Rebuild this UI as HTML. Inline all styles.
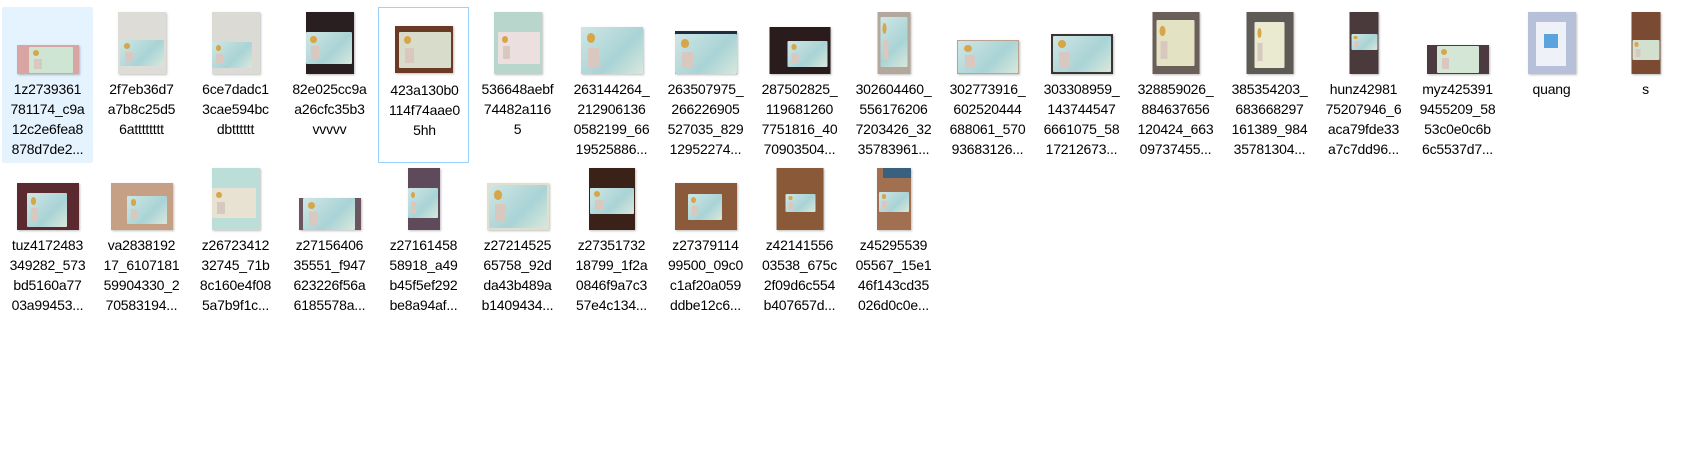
<!DOCTYPE html>
<html><head><meta charset="utf-8"><style>
html,body{margin:0;padding:0;background:#fff;width:1692px;height:458px;overflow:hidden;font-family:"Segoe UI","Liberation Sans",sans-serif}
.c{position:absolute;width:91px;height:156px;box-sizing:border-box}
.sel{background:#e5f3ff;border-radius:2px}
.hov{border:1px solid #99d1ff}
.t{position:absolute;bottom:89px;left:50%;transform:translateX(-50%);box-shadow:1px 1px 2px rgba(0,0,0,.25);overflow:hidden}
.t i{position:absolute;display:block;background:linear-gradient(135deg,#cfe6e4,#a9d3d6 60%,#d9e8dc);border-radius:1px}
.t i:before{content:"";position:absolute;left:12%;top:45%;width:18%;height:40%;background:#d9c8c0}
.t i:after{content:"";position:absolute;left:10%;top:12%;width:14%;height:22%;background:#d8a648;border-radius:50%}
.x{position:absolute;top:72px;left:0;width:91px;text-align:center;font-size:14px;line-height:20px;color:#000;white-space:nowrap;letter-spacing:-0.2px}
</style></head><body>

<div class="c sel" style="left:2px;top:7px"><div class="t" style="width:62px;height:29px;background:#d9a5a2"><i style="left:12px;top:2px;width:44px;height:26px;background:#cfe5d4"></i></div><div class="x">1z2739361<br>781174_c9a<br>12c2e6fea8<br>878d7de2...</div></div>
<div class="c" style="left:96px;top:7px"><div class="t" style="width:48px;height:62px;background:#dedcd6"><i style="left:2px;top:28px;width:44px;height:26px"></i></div><div class="x">2f7eb36d7<br>a7b8c25d5<br>6atttttttt</div></div>
<div class="c" style="left:190px;top:7px"><div class="t" style="width:48px;height:62px;background:#dcdad4"><i style="left:0px;top:30px;width:40px;height:26px"></i></div><div class="x">6ce7dadc1<br>3cae594bc<br>dbtttttt</div></div>
<div class="c" style="left:284px;top:7px"><div class="t" style="width:48px;height:62px;background:#2a1f20"><i style="left:0px;top:20px;width:46px;height:32px"></i></div><div class="x">82e025cc9a<br>a26cfc35b3<br>vvvvv</div></div>
<div class="c hov" style="left:378px;top:7px"><div class="t" style="width:58px;height:47px;background:#6a3a25"><i style="left:4px;top:6px;width:52px;height:36px;background:#d8dccb"></i></div><div class="x">423a130b0<br>114f74aae0<br>5hh</div></div>
<div class="c" style="left:472px;top:7px"><div class="t" style="width:48px;height:62px;background:#b8d6cc"><i style="left:4px;top:20px;width:42px;height:32px;background:#ecdfe0"></i></div><div class="x">536648aebf<br>74482a116<br>5</div></div>
<div class="c" style="left:566px;top:7px"><div class="t" style="width:62px;height:47px;background:#c9d8dc"><i style="left:0;top:0;width:62px;height:47px"></i></div><div class="x">263144264_<br>212906136<br>0582199_66<br>19525886...</div></div>
<div class="c" style="left:660px;top:7px"><div class="t" style="width:62px;height:43px;background:#1e2e40"><i style="left:0;top:3px;width:62px;height:40px"></i></div><div class="x">263507975_<br>266226905<br>527035_829<br>12952274...</div></div>
<div class="c" style="left:754px;top:7px"><div class="t" style="width:61px;height:47px;background:#2a1c1c"><i style="left:18px;top:14px;width:40px;height:26px"></i></div><div class="x">287502825_<br>119681260<br>7751816_40<br>70903504...</div></div>
<div class="c" style="left:848px;top:7px"><div class="t" style="width:33px;height:62px;background:#b4a89c"><i style="left:3px;top:5px;width:27px;height:50px"></i></div><div class="x">302604460_<br>556176206<br>7203426_32<br>35783961...</div></div>
<div class="c" style="left:942px;top:7px"><div class="t" style="width:62px;height:34px;background:#b9a494"><i style="left:1px;top:1px;width:60px;height:32px"></i></div><div class="x">302773916_<br>602520444<br>688061_570<br>93683126...</div></div>
<div class="c" style="left:1036px;top:7px"><div class="t" style="width:62px;height:40px;background:#3a3532"><i style="left:2px;top:2px;width:58px;height:36px"></i></div><div class="x">303308959_<br>143744547<br>6661075_58<br>17212673...</div></div>
<div class="c" style="left:1130px;top:7px"><div class="t" style="width:47px;height:62px;background:#6b5f5a"><i style="left:4px;top:8px;width:38px;height:46px;background:#e3e2c3"></i></div><div class="x">328859026_<br>884637656<br>120424_663<br>09737455...</div></div>
<div class="c" style="left:1224px;top:7px"><div class="t" style="width:47px;height:62px;background:#5e5a55"><i style="left:8px;top:10px;width:30px;height:46px;background:#e9ead0"></i></div><div class="x">385354203_<br>683668297<br>161389_984<br>35781304...</div></div>
<div class="c" style="left:1318px;top:7px"><div class="t" style="width:29px;height:62px;background:#4a3a3c"><i style="left:2px;top:22px;width:26px;height:16px"></i></div><div class="x">hunz42981<br>75207946_6<br>aca79fde33<br>a7c7dd96...</div></div>
<div class="c" style="left:1412px;top:7px"><div class="t" style="width:62px;height:29px;background:#4c3a40"><i style="left:10px;top:1px;width:42px;height:27px;background:#d4e6d6"></i></div><div class="x">myz425391<br>9455209_58<br>53c0e0c6b<br>6c5537d7...</div></div>
<div class="c" style="left:1506px;top:7px"><div class="t" style="width:48px;height:62px;background:#b6c0d8"><b style="position:absolute;left:8px;top:10px;width:30px;height:44px;background:#eef2f8"></b><b style="position:absolute;left:16px;top:22px;width:14px;height:14px;background:#5aa3dc"></b></div><div class="x">quang</div></div>
<div class="c" style="left:1600px;top:7px"><div class="t" style="width:29px;height:62px;background:#7a4a33"><i style="left:1px;top:28px;width:27px;height:20px;background:#d2e1cf"></i></div><div class="x">s</div></div>

<div class="c" style="left:2px;top:163px"><div class="t" style="width:62px;height:47px;background:#5a2a30"><i style="left:10px;top:10px;width:40px;height:34px"></i></div><div class="x">tuz4172483<br>349282_573<br>bd5160a77<br>03a99453...</div></div>
<div class="c" style="left:96px;top:163px"><div class="t" style="width:62px;height:47px;background:#c5a085"><i style="left:16px;top:13px;width:40px;height:28px"></i></div><div class="x">va2838192<br>17_6107181<br>59904330_2<br>70583194...</div></div>
<div class="c" style="left:190px;top:163px"><div class="t" style="width:48px;height:62px;background:#bcded8"><i style="left:0;top:20px;width:44px;height:30px;background:#e8e2d2"></i></div><div class="x">z26723412<br>32745_71b<br>8c160e4f08<br>5a7b9f1c...</div></div>
<div class="c" style="left:284px;top:163px"><div class="t" style="width:62px;height:32px;background:#6a5560"><i style="left:4px;top:0;width:52px;height:32px"></i></div><div class="x">z27156406<br>35551_f947<br>623226f56a<br>6185578a...</div></div>
<div class="c" style="left:378px;top:163px"><div class="t" style="width:32px;height:62px;background:#5e4a5a"><i style="left:0;top:20px;width:30px;height:30px"></i></div><div class="x">z27161458<br>58918_a49<br>b45f5ef292<br>be8a94af...</div></div>
<div class="c" style="left:472px;top:163px"><div class="t" style="width:62px;height:47px;background:#e0e0d0"><i style="left:2px;top:2px;width:58px;height:43px"></i></div><div class="x">z27214525<br>65758_92d<br>da43b489a<br>b1409434...</div></div>
<div class="c" style="left:566px;top:163px"><div class="t" style="width:46px;height:62px;background:#3a2218"><i style="left:1px;top:20px;width:44px;height:26px"></i></div><div class="x">z27351732<br>18799_1f2a<br>0846f9a7c3<br>57e4c134...</div></div>
<div class="c" style="left:660px;top:163px"><div class="t" style="width:62px;height:47px;background:#8a5a3a"><i style="left:13px;top:11px;width:34px;height:26px"></i></div><div class="x">z27379114<br>99500_09c0<br>c1af20a059<br>ddbe12c6...</div></div>
<div class="c" style="left:754px;top:163px"><div class="t" style="width:47px;height:62px;background:#8a5a38"><i style="left:9px;top:26px;width:30px;height:18px"></i></div><div class="x">z42141556<br>03538_675c<br>2f09d6c554<br>b407657d...</div></div>
<div class="c" style="left:848px;top:163px"><div class="t" style="width:34px;height:62px;background:#a07050"><b style="position:absolute;left:6px;top:0;width:28px;height:10px;background:#3a6080"></b><i style="left:2px;top:24px;width:30px;height:20px"></i></div><div class="x">z45295539<br>05567_15e1<br>46f143cd35<br>026d0c0e...</div></div>

</body></html>
